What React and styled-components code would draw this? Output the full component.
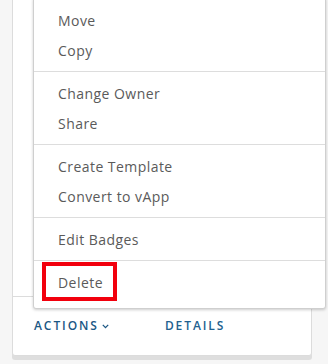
import React from "react";
import styled, { createGlobalStyle } from "styled-components";

const Global = createGlobalStyle`
  html, body { margin: 0; padding: 0; }
  body {
    background: #f6f6f6;
    font-family: "Open Sans", "Liberation Sans", sans-serif;
    overflow: hidden;
  }
  #root { width: 328px; height: 364px; }
`;

const Page = styled.div`
  position: relative;
  width: 328px;
  height: 364px;
  padding-left: 12px;
  box-sizing: border-box;
`;

const Card = styled.div`
  width: 300px;
  margin-top: -1px;
  box-sizing: border-box;
  background: #fff;
  border: 1px solid #dcdcdc;
  border-radius: 0 0 3px 3px;
  box-shadow: 0 4px 0 0 #dedede;
  display: flex;
  flex-direction: column;
`;

const CardBody = styled.div`
  height: 296px;
  border-bottom: 1px solid #dcdcdc;
`;

const CardFooter = styled.div`
  height: 58px;
  display: flex;
  align-items: center;
  padding: 0 0 0 21px;
  gap: 56px;
`;

const LinkButton = styled.button`
  border: 0;
  background: none;
  padding: 0;
  margin: 0;
  display: flex;
  align-items: center;
  gap: 3px;
  font-family: "Open Sans", "Liberation Sans", sans-serif;
  font-size: 12px;
  font-weight: 600;
  letter-spacing: 0.16em;
  text-transform: uppercase;
  color: ${(p) => p.$color || "#1b5784"};
  cursor: pointer;
  line-height: 16px;
`;

const Menu = styled.div`
  position: absolute;
  left: 33px;
  top: -1px;
  width: 293px;
  box-sizing: border-box;
  background: #fff;
  border: 1px solid #cfcfcf;
  border-radius: 0 0 3px 3px;
  box-shadow: 0 1px 3px rgba(0, 0, 0, 0.2);
  padding: 6px 0 11px;
  display: flex;
  flex-direction: column;
`;

const Item = styled.div`
  position: relative;
  height: 30px;
  display: flex;
  align-items: center;
  padding-left: 24px;
  font-size: 14px;
  letter-spacing: 0.45px;
  color: #5a5a5a;
  cursor: pointer;
`;

const Highlight = styled.span`
  position: absolute;
  left: 8px;
  top: -5px;
  width: 75px;
  height: 39px;
  box-sizing: border-box;
  border: 4px solid #f2000d;
  pointer-events: none;
`;

const Divider = styled.div`
  height: 1px;
  background: #dddddd;
  margin: 6px 0;
`;

const Caret = () => (
  <svg width="7" height="5" viewBox="0 0 7 5" fill="none">
    <path d="M0.8 0.9 L3.5 3.6 L6.2 0.9" stroke="#1b5784" strokeWidth="1.3" />
  </svg>
);

const groups = [
  ["Move", "Copy"],
  ["Change Owner", "Share"],
  ["Create Template", "Convert to vApp"],
  ["Edit Badges"],
];

export default function App() {
  return (
    <Page>
      <Global />
      <Card>
        <CardBody />
        <CardFooter>
          <LinkButton>
            Actions
            <Caret />
          </LinkButton>
          <LinkButton $color="#22618f">Details</LinkButton>
        </CardFooter>
      </Card>
      <Menu>
        {groups.map((g, i) => (
          <React.Fragment key={i}>
            {g.map((label) => (
              <Item key={label}>{label}</Item>
            ))}
            <Divider />
          </React.Fragment>
        ))}
        <Item>
          Delete
          <Highlight />
        </Item>
      </Menu>
    </Page>
  );
}
